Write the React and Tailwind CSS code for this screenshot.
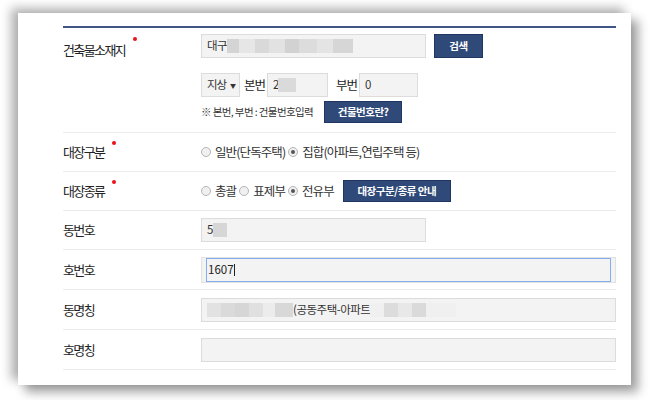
import React from "react";

const font = { fontFamily: '"Noto Sans CJK KR", "Noto Sans", sans-serif' };

function Dot() {
  return <span className="relative top-[-9px] ml-[8px] inline-block h-[4px] w-[4px] rounded-full bg-[#e8141b]" />;
}

function Label({ children, req }) {
  return (
    <div className="flex w-[138px] shrink-0 items-center text-[13px] tracking-[-1.6px] text-[#222]">
      <span>{children}</span>
      {req && <Dot />}
    </div>
  );
}

function Radio({ checked, children }) {
  return (
    <span className="inline-flex items-center">
      <span className="mr-[4px] flex h-[10px] w-[10px] items-center justify-center rounded-full border border-[#b5b5b5] bg-[#f0f0f0]">
        {checked && <span className="h-[4px] w-[4px] rounded-full bg-[#555]" />}
      </span>
      <span>{children}</span>
    </span>
  );
}

function Blur({ w, c = "#dedede" }) {
  return <span className="inline-block h-[14px] align-middle" style={{ width: w, background: c }} />;
}

function Btn({ children, className = "" }) {
  return (
    <button className={"h-[22px] border border-[#1e3660] bg-[#2f4a78] text-[10.5px] font-bold tracking-[-0.5px] text-white " + className}>
      {children}
    </button>
  );
}

function Row({ children, className = "" }) {
  return <div className={"flex border-b border-[#ececec] " + className}>{children}</div>;
}

const inputCls = "flex h-[24px] items-center border border-[#dcdcdc] bg-[#f3f3f3] px-[5px] text-[11.5px] text-[#333]";

export default function App() {
  return (
    <div className="h-[400px] w-[650px] overflow-hidden bg-white" style={font}>
      <div className="ml-[18px] mt-[13px] h-[372px] w-[613px] bg-white pl-[45px] pr-[15px] pt-[13px] shadow-[-7px_-5px_10px_rgba(0,0,0,0.3),7px_7px_10px_rgba(0,0,0,0.38)]">
        <div className="h-[2px] bg-[#3d5685]" />
        {/* row 1 */}
        <Row className="h-[105px]">
          <div className="flex w-[138px] shrink-0 items-start pt-[12px] text-[13px] tracking-[-1.6px] text-[#222]">
            <span>건축물소재지</span>
            <span className="ml-[8px] mt-[-3px] inline-block h-[4px] w-[4px] rounded-full bg-[#e8141b]" />
          </div>
          <div className="flex flex-col pt-[6px]">
            <div className="flex items-center gap-[8px]">
              <div className={inputCls + " w-[225px] gap-0 overflow-hidden"}>
                <span className="tracking-[-0.5px]">대구</span>
                <Blur w={12} c="#d4d4d4" />
                <Blur w={16} c="#e6e6e6" />
                <Blur w={14} c="#d9d9d9" />
                <Blur w={16} c="#e2e2e2" />
                <Blur w={14} c="#d2d2d2" />
                <Blur w={18} c="#dcdcdc" />
                <Blur w={16} c="#e4e4e4" />
                <Blur w={20} c="#d6d6d6" />
              </div>
              <Btn className="w-[49px] h-[24px]">검색</Btn>
            </div>
            <div className="mt-[15px] flex items-center text-[12.5px] tracking-[-1px] text-[#222]">
              <div className={inputCls + " w-[39px] justify-between pr-[4px]"}>
                <span className="tracking-[-1px]">지상</span>
                <span className="text-[6px]">▼</span>
              </div>
              <span className="ml-[4px]">본번</span>
              <div className={inputCls + " ml-[2px] w-[61px]"}>
                <span>2</span>
                <Blur w={18} c="#dadada" />
              </div>
              <span className="ml-[8px]">부번</span>
              <div className={inputCls + " ml-[2px] w-[59px]"}>
                <span>0</span>
              </div>
            </div>
            <div className="mt-[4px] flex items-center text-[10.5px] tracking-[-0.6px] text-[#333]">
              <span>※ 본번, 부번 : 건물번호입력</span>
              <Btn className="ml-[11px] w-[78px] h-[22px]">건물번호란?</Btn>
            </div>
          </div>
        </Row>
        {/* row 2 */}
        <Row className="h-[39px]">
          <Label req>대장구분</Label>
          <div className="flex items-center gap-[3px] text-[12.5px] tracking-[-0.9px] text-[#333]">
            <Radio>일반(단독주택)</Radio>
            <Radio checked>집합(아파트,연립주택 등)</Radio>
          </div>
        </Row>
        {/* row 3 */}
        <Row className="h-[39px]">
          <Label req>대장종류</Label>
          <div className="flex items-center gap-[3px] text-[12.5px] tracking-[-0.9px] text-[#333]">
            <Radio>총괄</Radio>
            <Radio>표제부</Radio>
            <Radio checked>전유부</Radio>
            <Btn className="ml-[6px] w-[108px]">대장구분/종류 안내</Btn>
          </div>
        </Row>
        {/* row 4 */}
        <Row className="h-[39px] items-center">
          <Label>동번호</Label>
          <div className={inputCls + " w-[225px]"}>
            <span>5</span>
            <Blur w={14} c="#d6d6d6" />
          </div>
        </Row>
        {/* row 5 */}
        <Row className="h-[40px] items-center">
          <Label>호번호</Label>
          <div className="flex h-[26px] flex-1 border border-[#e2e2e2] bg-[#f3f3f3] px-[4px]">
            <div className="flex flex-1 items-center border-[1.5px] border-[#82aef0] bg-[#f3f3f3] pl-[1px] text-[11.5px] text-[#222]">
              1607<span className="inline-block h-[12px] w-[1px] bg-[#222]" />
            </div>
          </div>
        </Row>
        {/* row 6 */}
        <Row className="h-[40px] items-center">
          <Label>동명칭</Label>
          <div className={inputCls + " flex-1 text-[11.5px] tracking-[-0.5px]"}>
            <Blur w={14} c="#e2e2e2" />
            <Blur w={14} c="#dadada" />
            <Blur w={14} c="#d6d6d6" />
            <Blur w={14} c="#e0e0e0" />
            <Blur w={12} c="#ececec" />
            <Blur w={18} c="#d8d8d8" />
            <span>(공동주택-아파트</span>
            <Blur w={14} c="#f0f0f0" />
            <Blur w={14} c="#dcdcdc" />
            <Blur w={14} c="#e8e8e8" />
            <Blur w={14} c="#dadada" />
            <Blur w={30} c="#f0f0f0" />
          </div>
        </Row>
        {/* row 7 */}
        <Row className="h-[40px] items-center">
          <Label>호명칭</Label>
          <div className={inputCls + " flex-1"} />
        </Row>
      </div>
    </div>
  );
}
